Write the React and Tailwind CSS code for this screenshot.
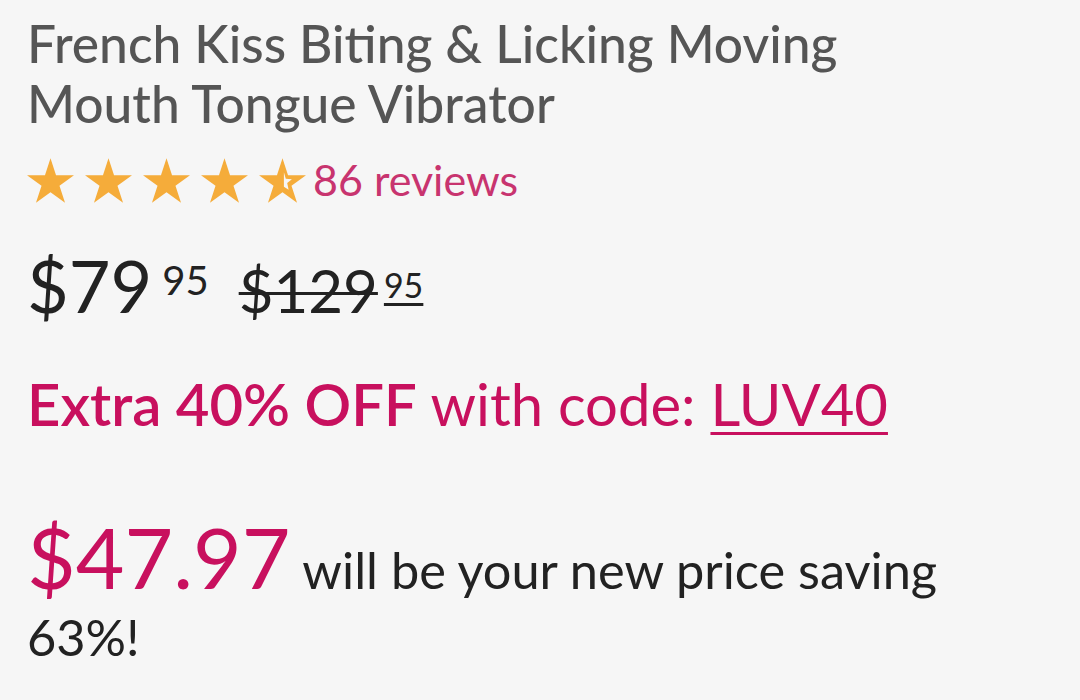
const STAR = 'M50 0 L61.8 36.3 L100 36.3 L69.1 58.8 L80.9 95 L50 72.7 L19.1 95 L30.9 58.8 L0 36.3 L38.2 36.3Z';

function Star({ half }) {
  return (
    <svg viewBox="0 0 100 95" className="w-[47px] h-[45px]">
      <path d={STAR} fill="#f5ac3a" />
      {half && <path d="M53 30 L57 44 L70 45 L60 53 L63 67 L53 61Z" fill="#f6f6f6" />}
    </svg>
  );
}

export default function App() {
  return (
    <div className="w-[1080px] h-[700px] bg-[#f6f6f6] px-[27px] pt-[13px] font-['Lato','Liberation_Sans',sans-serif]">
      <h1 className="text-[51.5px] leading-[60px] font-medium text-[#555555] max-w-[920px]">
        French Kiss Biting &amp; Licking Moving Mouth Tongue Vibrator
      </h1>

      <div className="flex items-center mt-[24px] h-[46px]">
        <div className="flex items-center gap-[11px]">
          <Star />
          <Star />
          <Star />
          <Star />
          <Star half />
        </div>
        <span className="ml-[7px] text-[43px] leading-[46px] text-[#c8346f]">86 reviews</span>
      </div>

      <div className="mt-[46px] text-[72px] leading-[72px] text-[#222222] whitespace-nowrap">
        <span>$79</span>
        <span className="ml-[10px] text-[40px] leading-none align-[18px]">95</span>
        <span className="ml-[30px] text-[60px] leading-none line-through decoration-[3px]">$129</span>
        <span className="ml-[6px] text-[34px] leading-none align-[15px] underline decoration-[3px] underline-offset-[5px]">95</span>
      </div>

      <div className="mt-[53px] text-[58px] leading-[60px] text-[#c8105e] whitespace-nowrap">
        <span className="font-semibold">Extra 40% OFF</span> with code:{' '}
        <span className="underline decoration-[3px] underline-offset-[6px]">LUV40</span>
      </div>

      <div className="mt-[81px] text-[50.5px] leading-[67px] text-[#222222] max-w-[960px]">
        <span className="text-[84px] leading-[84px] text-[#c8105e]">$47.97</span>{' '}
        will be your new price saving 63%!
      </div>
    </div>
  );
}
